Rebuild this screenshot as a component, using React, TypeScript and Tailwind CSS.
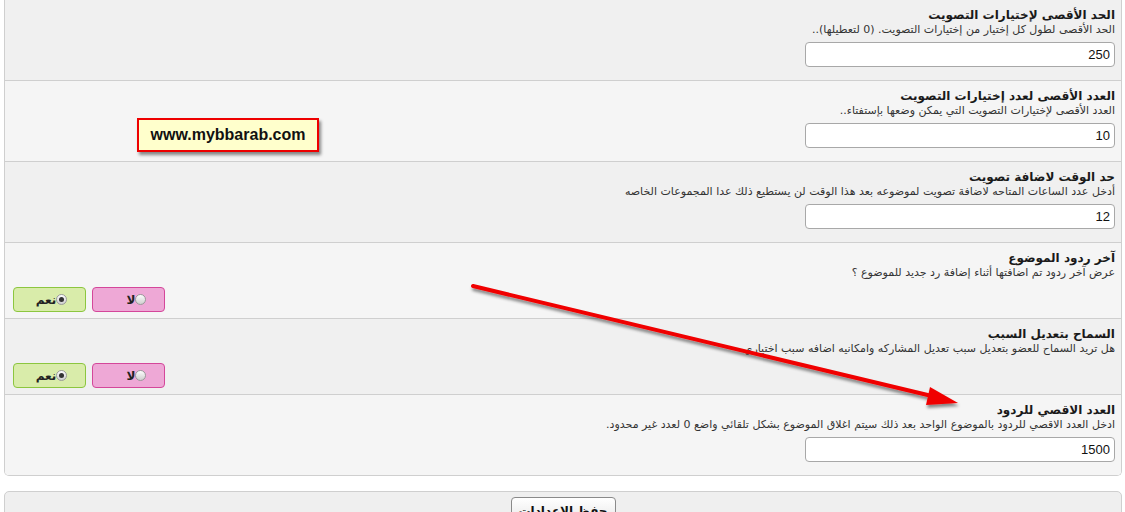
import React from 'react';

type Row = {
  title: string;
  desc: string;
  value?: string;
  radio?: boolean;
};

const rows: Row[] = [
  {
    title: 'الحد الأقصى لإختيارات التصويت',
    desc: 'الحد الأقصى لطول كل إختيار من إختيارات التصويت. (0 لتعطيلها)..',
    value: '250',
  },
  {
    title: 'العدد الأقصى لعدد إختيارات التصويت',
    desc: 'العدد الأقصى لإختيارات التصويت التي يمكن وضعها بإستفتاء..',
    value: '10',
  },
  {
    title: 'حد الوقت لاضافة تصويت',
    desc: 'أدخل عدد الساعات المتاحه لاضافة تصويت لموضوعه بعد هذا الوقت لن يستطيع ذلك عدا المجموعات الخاصه',
    value: '12',
  },
  {
    title: 'آخر ردود الموضوع',
    desc: 'عرض آخر ردود تم اضافتها أثناء إضافة رد جديد للموضوع ؟',
    radio: true,
  },
  {
    title: 'السماح بتعديل السبب',
    desc: 'هل تريد السماح للعضو بتعديل سبب تعديل المشاركه وامكانيه اضافه سبب اختياري',
    radio: true,
  },
  {
    title: 'العدد الاقصي للردود',
    desc: 'ادخل العدد الاقصي للردود بالموضوع الواحد بعد ذلك سيتم اغلاق الموضوع بشكل تلقائي واضع 0 لعدد غير محدود.',
    value: '1500',
  },
];

const RadioDot = ({ checked }: { checked?: boolean }) => (
  <span className="inline-flex h-[11px] w-[11px] items-center justify-center rounded-full border border-[#9a9a9a] bg-gradient-to-b from-[#fdfdfd] to-[#cfcfcf]">
    {checked && <span className="h-[5px] w-[5px] rounded-full bg-[#333]" />}
  </span>
);

const YesNo = () => (
  <div className="flex gap-[6px] mt-[7px]" dir="ltr">
    <div className="flex h-[25px] w-[73px] items-center justify-center rounded-[4px] border border-[#8cc63f] bg-[#d9ecaa]">
      <span className="flex items-center pl-[4px]">
        <span className="text-[12px] font-bold text-[#222]">نعم</span>
        <RadioDot checked />
      </span>
    </div>
    <div className="flex h-[25px] w-[73px] items-center justify-center rounded-[4px] border border-[#d4479a] bg-[#eea8d6]">
      <span className="flex items-center pl-[16px]">
        <span className="text-[12px] font-bold text-[#222]">لا</span>
        <RadioDot />
      </span>
    </div>
  </div>
);

export default function App() {
  return (
    <div className="relative h-[512px] w-[1125px] overflow-hidden bg-white font-['DejaVu_Sans',sans-serif]">
      {/* Settings panel */}
      <div dir="rtl" className="ml-[4px] mr-[3px] rounded-b-[5px] border border-t-0 border-[#cfcfcf] overflow-hidden">
        {rows.map((r, i) => (
          <div
            key={i}
            className={`pl-[8px] pr-[6px] pt-[7px] ${r.radio ? 'pb-[6px]' : 'pb-[13px]'} ${i % 2 === 0 ? 'bg-[#f0f0f0]' : 'bg-[#f5f5f5]'} ${i < rows.length - 1 ? 'border-b border-[#cfcfcf]' : ''}`}
          >
            <div className="text-[12px] font-bold leading-[16px] text-[#1a1a1a]">{r.title}</div>
            <div className="text-[11px] leading-[14px] text-[#333]">{r.desc}</div>
            {r.radio ? (
              <YesNo />
            ) : (
              <input
                readOnly
                value={r.value}
                className="mt-[5px] block h-[25px] w-[310px] rounded-[4px] border border-[#a8a8a8] bg-white px-[4px] text-right font-['Liberation_Sans',sans-serif] text-[13px] text-[#111] outline-none"
              />
            )}
          </div>
        ))}
      </div>

      {/* Save panel */}
      <div className="ml-[4px] mr-[3px] mt-[15px] flex h-[40px] justify-center rounded-[5px] border border-[#cfcfcf] bg-[#efefef] pt-[5px]">
        <button
          dir="rtl"
          className="h-[28px] w-[105px] whitespace-nowrap rounded-[4px] border border-[#8a8a8a] bg-gradient-to-b from-white to-[#e6e6e6] px-0 text-[12px] font-bold leading-[26px] text-[#111]"
        >
          حفظ الإعدادات
        </button>
      </div>

      {/* Watermark */}
      <div className="absolute left-[137px] top-[118px] flex h-[34px] w-[182px] items-center justify-center border-2 border-[#ee0000] bg-[#ffffcc] shadow-[2px_3px_3px_rgba(0,0,0,0.45)]">
        <span className="font-['Liberation_Sans',sans-serif] text-[16px] font-bold text-[#111]">www.mybbarab.com</span>
      </div>

      {/* Arrow annotation */}
      <svg className="pointer-events-none absolute left-0 top-0" width="1125" height="512">
        <defs>
          <filter id="sh" x="-10%" y="-10%" width="120%" height="130%">
            <feDropShadow dx="1" dy="3" stdDeviation="1.6" floodColor="#000" floodOpacity="0.45" />
          </filter>
        </defs>
        <g filter="url(#sh)">
          <line x1="473" y1="286" x2="936" y2="397" stroke="#f00000" strokeWidth="4" strokeLinecap="round" />
          <polygon points="958,403 930,387 926,405" fill="#f00000" />
        </g>
      </svg>
    </div>
  );
}
